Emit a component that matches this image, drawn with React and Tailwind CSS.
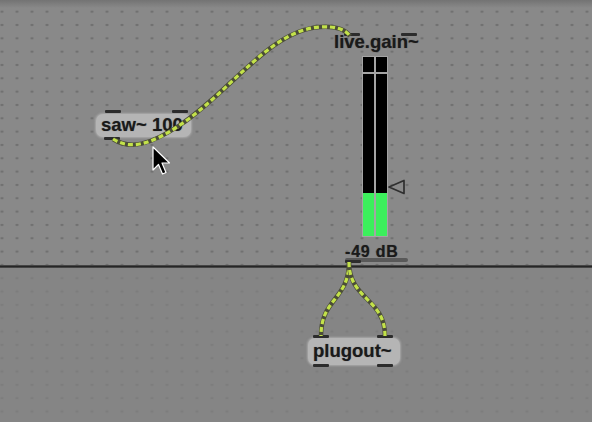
import React from "react";

const font = { fontFamily: '"Liberation Sans", Arial, sans-serif' };

const cables = [
  "M113,139 C130,150 150,145 180,125 C230,92 270,30 320,27 C335,26 345,29 350,36",
  "M349,262 C349,300 321,298 321,336",
  "M349,262 C349,300 385,298 385,336",
];

function Tab({ className }) {
  return <div className={`absolute h-[3px] w-[16px] rounded-[1px] bg-[#2c2c2c] ${className}`} />;
}

function ObjectBox({ text, className, children }) {
  return (
    <div
      className={`absolute flex items-center rounded-[7px] bg-[#b5b5b5] pl-[5px] text-[18.5px] font-bold leading-none text-[#1a1a1a] shadow-[0_0_2px_1px_rgba(190,190,190,0.6)] [text-shadow:0_0_1px_rgba(0,0,0,0.45)] ${className}`}
      style={font}
    >
      {text}
      {children}
    </div>
  );
}

function Meter() {
  return (
    <div className="flex gap-[2px]">
      {[0, 1].map((i) => (
        <div key={i} className="flex w-[11px] flex-col gap-[2px]">
          <div className="h-[15px] bg-black ring-1 ring-[#a4a4a4]" />
          <div className="flex h-[162px] flex-col ring-1 ring-[#a4a4a4]">
            <div className="flex-1 bg-black" />
            <div className="h-[43px] bg-[#3cef5c]" />
          </div>
        </div>
      ))}
    </div>
  );
}

function LiveGain() {
  return (
    <div className="absolute left-[334px] top-[33px] flex w-[90px] flex-col text-[#1a1a1a] [text-shadow:0_0_1px_rgba(0,0,0,0.45)]">
      <Tab className="left-[10px] top-0 w-[12px]" />
      <Tab className="left-[67px] top-0 w-[12px]" />
      <div className="h-[24px] text-[18.5px] font-bold leading-none">live.gain~</div>
      <div className="flex items-start pl-[29px]">
        <Meter />
        <svg className="ml-[-1px] mt-[121px]" width="22" height="18" viewBox="0 0 22 18">
          <path d="M3,9 L18,2.5 L18,15.5 Z" fill="none" stroke="#2f2f2f" strokeWidth="1.7" strokeLinejoin="round" />
        </svg>
      </div>
      <div className="relative mt-[8px] ml-[11px] w-fit">
        <div className="text-[16px] font-bold leading-none tracking-[0.8px]">-49 dB</div>
        <div className="mt-[-2px] h-[4px] w-[63px] rounded-[2px] bg-[#454545]/70" />
        <Tab className="left-0 bottom-[-1px] w-[12px]" />
      </div>
    </div>
  );
}

export default function App() {
  return (
    <div className="relative h-[422px] w-[592px] overflow-hidden bg-[#898989]" style={font}>
      <div className="flex h-full flex-col bg-[radial-gradient(circle,#6e6e6e_1px,transparent_1.5px)] bg-[length:15px_13.333px] bg-[position:-5.5px_5px]">
        <div className="flex h-[265px] flex-col">
          <div className="h-[8px] bg-gradient-to-b from-[#737373] to-transparent" />
        </div>
        <div className="h-[3px] bg-gradient-to-b from-[#555] via-[#262626] to-[#555]" />
        <div className="flex-1 bg-[#838383]/70" />
      </div>

      <LiveGain />

      <ObjectBox text="saw~ 100" className="left-[96px] top-[114px] h-[23px] w-[95px]">
        <Tab className="left-[9px] top-[-4px]" />
        <Tab className="left-[76px] top-[-4px]" />
        <Tab className="left-[8px] bottom-[-3px]" />
      </ObjectBox>

      <ObjectBox text="plugout~" className="left-[308px] top-[338px] h-[27px] w-[92px]">
        <Tab className="left-[5px] top-[-3px]" />
        <Tab className="left-[69px] top-[-3px]" />
        <Tab className="left-[5px] bottom-[-2px]" />
        <Tab className="left-[69px] bottom-[-2px]" />
      </ObjectBox>

      <svg className="absolute left-0 top-0" width="592" height="422" viewBox="0 0 592 422">
        {cables.map((d) => (
          <g key={d} fill="none" strokeLinecap="butt">
            <path d={d} stroke="#4b4d38" strokeWidth="4.5" />
            <path d={d} stroke="#c3e24a" strokeWidth="3.2" strokeDasharray="5 3" />
          </g>
        ))}
        <path
          d="M153,147 L153,170 L158.5,164.5 L162.5,174 L166,172.5 L162,163 L169.5,163 Z"
          fill="#000"
          stroke="#fff"
          strokeWidth="1.2"
          strokeLinejoin="round"
        />
      </svg>
    </div>
  );
}
